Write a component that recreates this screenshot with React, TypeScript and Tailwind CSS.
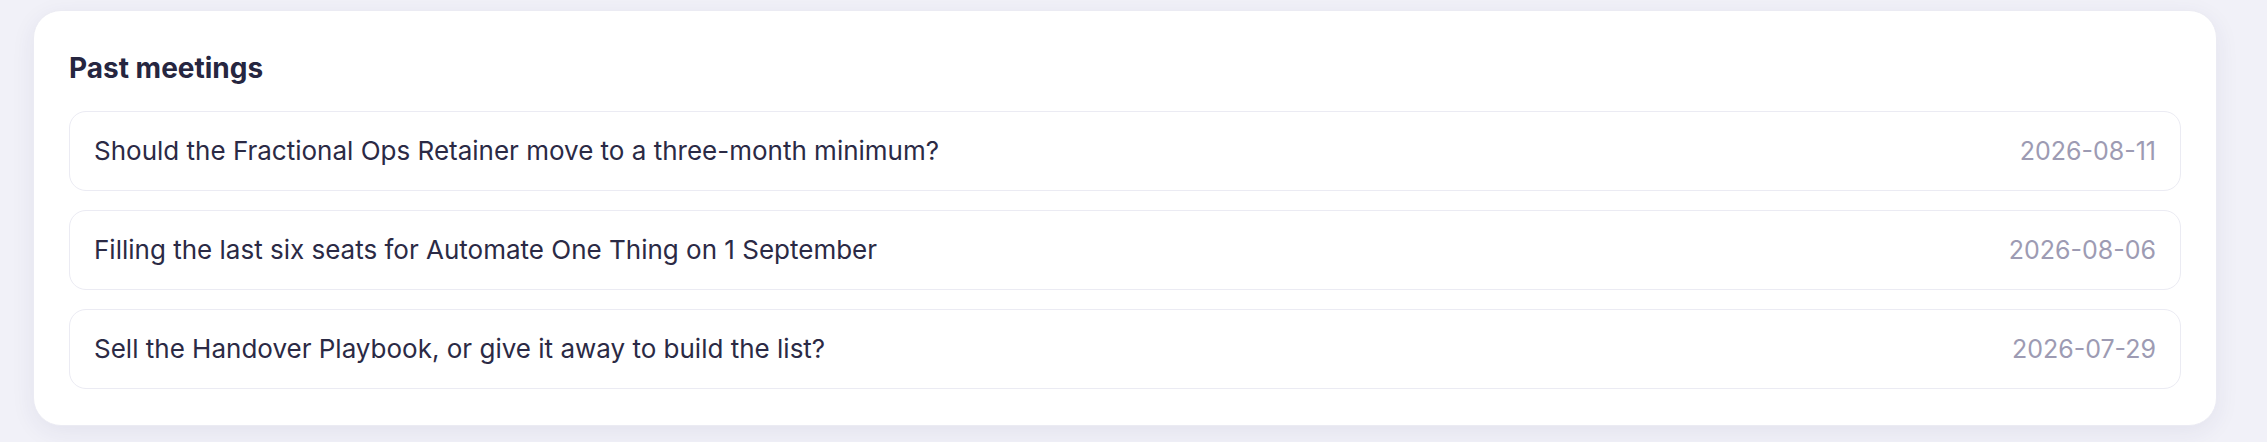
const meetings = [
  { title: "Should the Fractional Ops Retainer move to a three-month minimum?", date: "2026-08-11" },
  { title: "Filling the last six seats for Automate One Thing on 1 September", date: "2026-08-06" },
  { title: "Sell the Handover Playbook, or give it away to build the list?", date: "2026-07-29" },
];

export default function App() {
  return (
    <div
      className="min-h-[442px] bg-[#f1f1f8] pl-[33px] pt-[10px]"
      style={{ fontFamily: "Inter, 'Noto Sans', sans-serif" }}
    >
      <section className="w-[2184px] rounded-[28px] border border-[#ebebf3] bg-white px-[35px] pt-[39px] pb-[36px] shadow-[0_6px_24px_rgba(40,40,100,0.07)]">
        <h2 className="mb-[25px] text-[28px] leading-[36px] font-bold text-[#262640]">Past meetings</h2>
        <ul className="flex flex-col gap-[19px]">
          {meetings.map((m) => (
            <li
              key={m.date}
              className="flex items-center justify-between rounded-[17px] border border-[#ebebf3] px-6 py-[21px]"
            >
              <span className="text-[26px] leading-[36px] text-[#2b2a45]">{m.title}</span>
              <span className="text-[25px] leading-[36px] text-[#9d9bb3]">{m.date}</span>
            </li>
          ))}
        </ul>
      </section>
    </div>
  );
}
